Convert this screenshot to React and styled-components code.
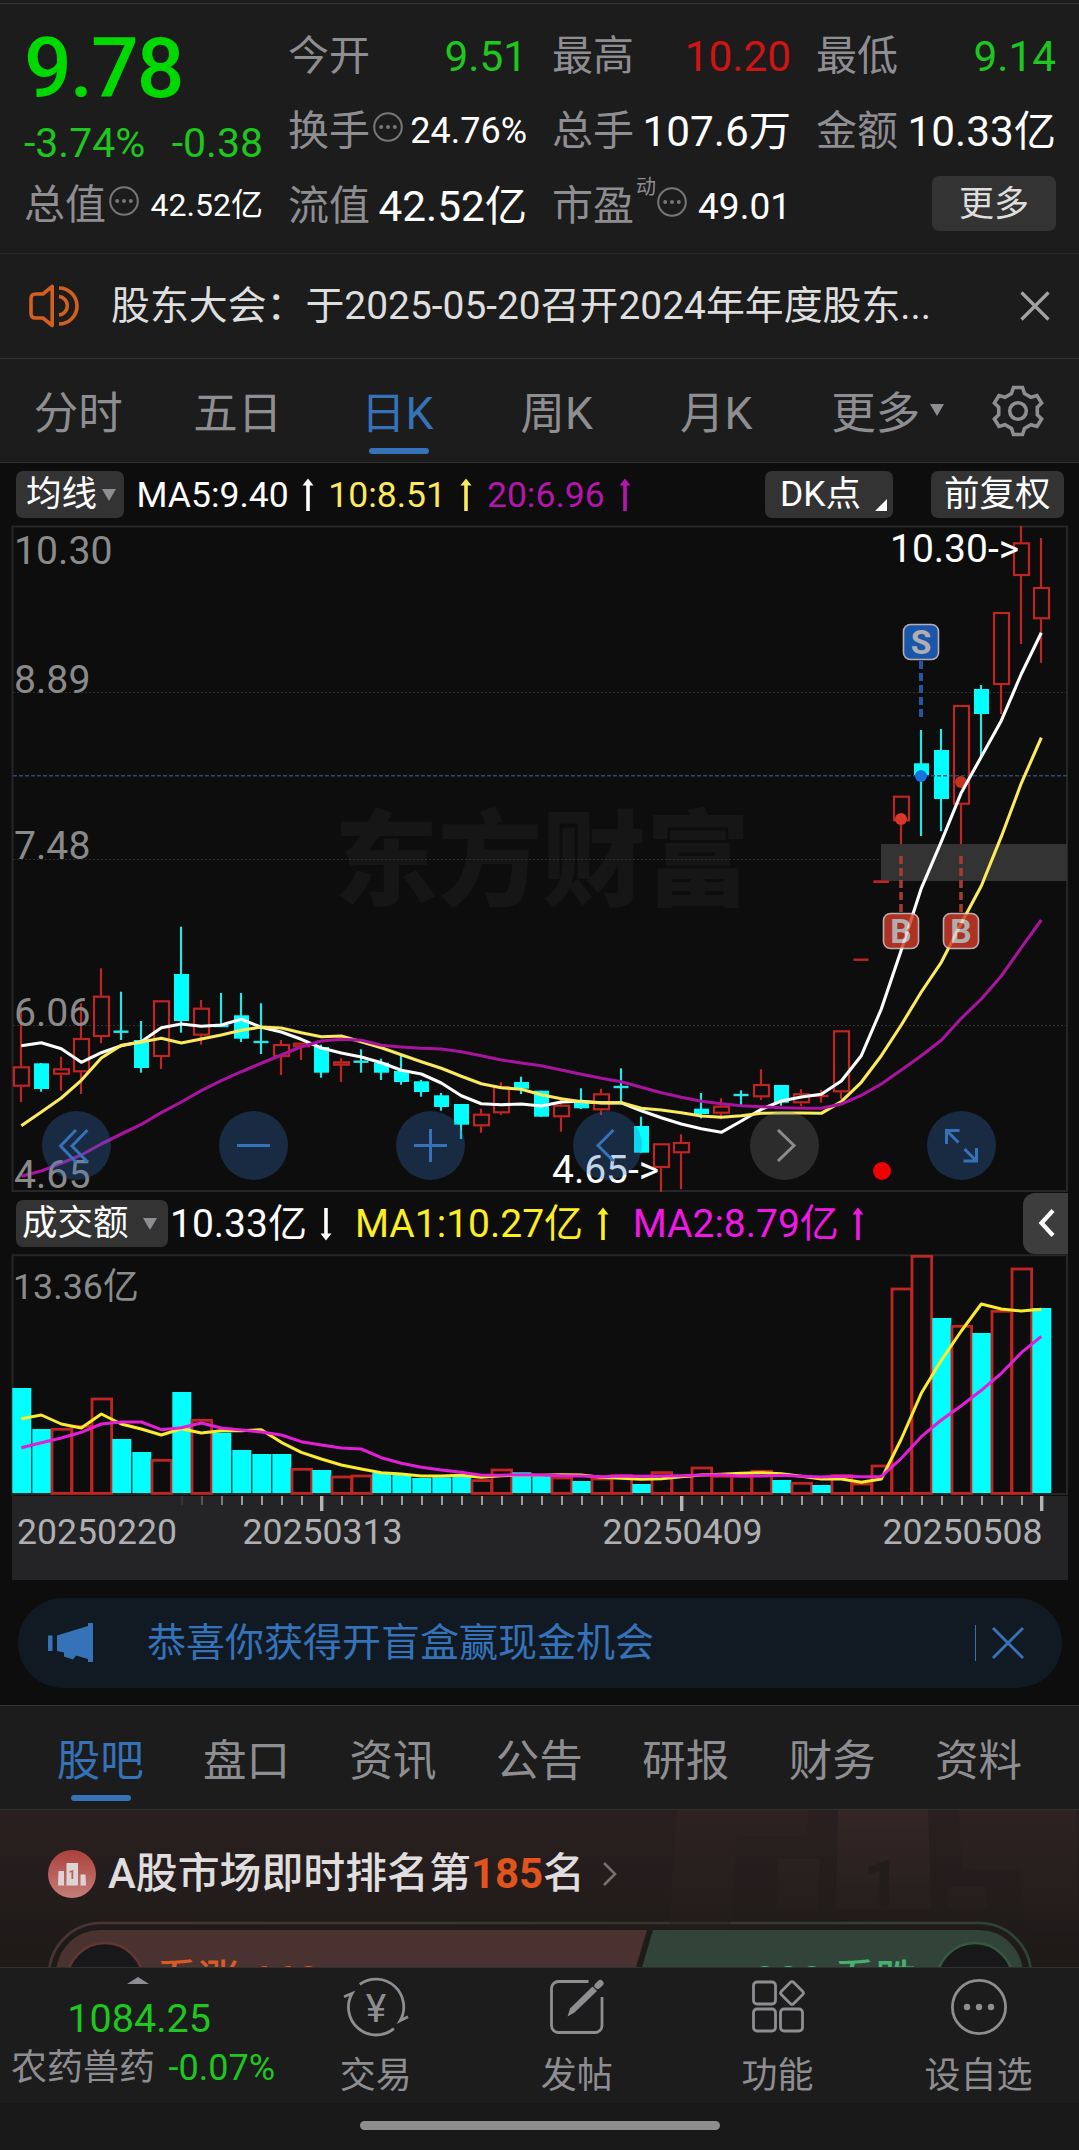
import React from "react";
import styled, { createGlobalStyle } from "styled-components";

const GREEN = "#1ec61e";
const BLUE = "#3572b8";
const GREY = "#8e8e92";
const UP = "#bf2522";
const DOWN = "#00ffff";
const FONT = `Roboto, "Noto Sans CJK SC", sans-serif`;

const STEP = 20;
const FIRST_X = 21;
const xAt = (i) => FIRST_X + i * STEP;

// [direction, body top, body bottom, high, low]
const candles = [
  ["up", 541.3, 561.7, 481.7, 577],
  ["down", 538.3, 564, 538, 566.7],
  ["up", 543.3, 549.7, 531.7, 565.7],
  ["up", 513, 547.3, 478.3, 569],
  ["up", 470.7, 512, 443.3, 518.3],
  ["down", 506.7, 506.7, 466.7, 515],
  ["down", 515, 543, 496, 547.7],
  ["up", 475.3, 532, 475.3, 544],
  ["down", 449, 496, 401.7, 507.7],
  ["up", 482.7, 510.7, 475, 519.7],
  ["down", 501, 501, 468, 501],
  ["down", 490.3, 513.7, 468, 517],
  ["down", 517, 517, 478.3, 529],
  ["up", 519, 532, 515, 550],
  ["up", 517.7, 522.3, 517.7, 535],
  ["down", 522, 547.7, 519.7, 552.7],
  ["up", 536.3, 540.7, 533.3, 557],
  ["down", 536.7, 536.7, 524.3, 547.7],
  ["down", 537.7, 547.7, 533.7, 555],
  ["down", 546, 557, 531, 559.7],
  ["down", 556.3, 567, 555, 571.7],
  ["down", 570.3, 582, 568, 585.7],
  ["down", 579, 599.7, 579, 614],
  ["up", 588.7, 601.3, 583.7, 607.7],
  ["up", 561, 588.3, 557.3, 590],
  ["down", 557, 563.7, 551.7, 569],
  ["down", 565.7, 591.7, 565.7, 591.7],
  ["up", 579.7, 592.3, 572.3, 606.7],
  ["down", 576.3, 583.3, 563.3, 584],
  ["up", 568.3, 585.3, 563.7, 590],
  ["down", 562, 562, 543.3, 576.3],
  ["down", 601, 627.7, 591.7, 627.7],
  ["up", 618.3, 643, 618.3, 667],
  ["up", 617, 628.3, 609.3, 664.3],
  ["down", 583.7, 589, 568, 593.3],
  ["up", 580.7, 588.7, 573.3, 594.3],
  ["down", 570, 570, 565.3, 581.7],
  ["up", 559, 572.3, 544.3, 575],
  ["down", 560, 577.7, 560, 580.7],
  ["up", 568.3, 578.3, 564.3, 581],
  ["up", 571, 571, 565, 577.7],
  ["up", 505.3, 567.3, 505.3, 574],
  ["up", 434.7, 434.7, 434.7, 434.7],
  ["up", 356.7, 356.7, 356.7, 356.7],
  ["up", 270.7, 296.3, 270.7, 319],
  ["down", 238.3, 250.7, 205, 311],
  ["down", 225, 274, 204, 306],
  ["up", 180, 279.7, 180, 319],
  ["down", 164, 189, 160, 233],
  ["up", 87, 160, 87, 189],
  ["up", 17.3, 51, 1, 119],
  ["up", 62, 94.3, 13, 137.7],
];

const ma5 = [
  520.7, 517.7, 523.7, 537.3, 527.7, 520.7, 516.7, 502.7, 499, 501.3, 500, 494.3, 502.3,
  507, 514.3, 523, 528, 532, 537.7, 545.3, 549, 558, 570.7, 578.7, 579.7, 579, 581, 577,
  576.3, 577.7, 577.7, 585.7, 592.7, 599, 603.7, 607.3, 596, 584.3, 576, 572, 569.3, 556,
  530.7, 484, 425, 363.3, 316.7, 267.7, 231.7, 195.7, 149, 107.7,
];
const ma10 = [
  600.7, 587, 573, 555.3, 533, 520.3, 517, 513.3, 518, 514, 510, 505.3, 502, 503, 507.7,
  511.7, 511, 516.7, 522.7, 529.7, 536.7, 543.3, 551.3, 558.7, 562.7, 564.3, 569.7, 573.7,
  576.7, 578, 577.7, 583.3, 585, 587.7, 591, 592.3, 590.7, 588.3, 588, 588, 588.3, 576.7,
  557.3, 530.7, 500, 467, 437.3, 398.3, 361, 311.7, 258.3, 212.7,
];
const ma20 = [
  651.3, 646, 638.3, 630, 619, 609, 599.3, 587.7, 577, 565.7, 555.7, 546.7, 538.3, 530,
  521.7, 516, 514.3, 515.3, 520.3, 522, 523.3, 524, 526.7, 530.7, 535, 538, 540.7, 545,
  549.3, 553.3, 556.7, 562.3, 567.7, 572.3, 576.3, 578.7, 580.7, 581.7, 582.7, 583.3,
  583.3, 579, 570.3, 559, 545, 530.7, 515.3, 493.3, 474, 451, 422.7, 395,
];

// [direction, top of bar]
const volumes = [
  ["down", 134], ["down", 175], ["up", 174], ["up", 171], ["up", 143.7], ["down", 185],
  ["down", 198], ["up", 205], ["down", 138], ["up", 165], ["down", 178.7], ["down", 196],
  ["down", 200], ["down", 200], ["up", 214], ["down", 216], ["up", 221.7], ["up", 220.7],
  ["down", 218.7], ["down", 220.7], ["down", 224], ["down", 223.3], ["down", 222.3],
  ["up", 225.3], ["up", 214.7], ["down", 218.3], ["down", 222.3], ["up", 222.7],
  ["down", 227], ["up", 223.7], ["up", 220.3], ["down", 230], ["up", 217.3], ["up", 221.3],
  ["up", 212.7], ["up", 221], ["up", 221], ["up", 216], ["down", 226], ["up", 228],
  ["down", 231], ["up", 220.3], ["up", 228.7], ["up", 210.7], ["up", 33.7], ["up", 1],
  ["down", 64], ["up", 71], ["down", 79], ["up", 56], ["up", 13.7], ["down", 54],
];
// volume averages are kept in thirds of a pixel
const volumeY = (v) => v / 3 - 74;
const volumeMa1 = [
  716, 705, 732, 744, 702, 732, 747, 765, 746, 759, 752, 752, 749, 787, 817, 837, 855, 867,
  878, 882, 888, 888, 886, 892, 887, 886, 886, 884, 885, 892, 895, 898, 896, 890, 885, 883,
  880, 878, 881, 889, 897, 897, 907, 897, 777, 640, 541, 453, 372, 387, 393, 388,
].map(volumeY);
const volumeMa2 = [
  803, 788, 774, 757, 732, 726, 726, 749, 743, 729, 744, 750, 756, 765, 785, 795, 804, 807,
  833, 850, 862, 870, 877, 886, 886, 884, 885, 887, 888, 890, 888, 889, 888, 887, 885, 884,
  888, 888, 886, 889, 891, 889, 890, 890, 835, 770, 720, 677, 631, 580, 518, 469,
].map(volumeY);

const toPoints = (values) => values.map((y, i) => `${xAt(i) + 0.3},${y.toFixed(1)}`).join(" ");

function DotsIcon() {
  return (
    <InfoDots width="30" height="30" viewBox="0 0 30 30">
      <circle cx="15" cy="15" r="13.8" fill="none" stroke="#77777a" strokeWidth="2" />
      <circle cx="8.2" cy="15" r="2" fill="#77777a" />
      <circle cx="15" cy="15" r="2" fill="#77777a" />
      <circle cx="21.8" cy="15" r="2" fill="#77777a" />
    </InfoDots>
  );
}

function Arrow({ down, left }) {
  return (
    <ArrowSvg $left={left} width="12" height="34" viewBox="0 0 12 34">
      <g transform={down ? "rotate(180 6 17)" : undefined}>
        <path d="M6 0.5L11.5 7.5H0.5Z" fill="currentColor" />
        <path d="M6 5V33" stroke="currentColor" strokeWidth="3.6" />
      </g>
    </ArrowSvg>
  );
}

function Stat({ label, value, color, size, info, sup }) {
  return (
    <StatRow>
      <StatLabel>{label}</StatLabel>
      {sup && <Sup>{sup}</Sup>}
      {info && <DotsIcon />}
      <StatValue $color={color} $size={size}>
        {value}
      </StatValue>
    </StatRow>
  );
}

function QuoteHeader() {
  return (
    <QuotePanel>
      <QuoteColumn $width={239}>
        <Price>9.78</Price>
        <Change>
          <span>-3.74%</span>
          <span>-0.38</span>
        </Change>
        <Stat label="总值" value="42.52亿" size={32} info />
      </QuoteColumn>
      <QuoteColumn $width={239}>
        <Stat label="今开" value="9.51" color={GREEN} />
        <Stat label="换手" value="24.76%" size={36} info />
        <Stat label="流值" value="42.52亿" />
      </QuoteColumn>
      <QuoteColumn $width={239}>
        <Stat label="最高" value="10.20" color="#d01414" />
        <Stat label="总手" value="107.6万" />
        <Stat label="市盈" value="49.01" size={37} sup="动" info />
      </QuoteColumn>
      <QuoteColumn $width={240}>
        <Stat label="最低" value="9.14" color={GREEN} />
        <Stat label="金额" value="10.33亿" />
        <MoreRow>
          <MoreButton>更多</MoreButton>
        </MoreRow>
      </QuoteColumn>
    </QuotePanel>
  );
}

function NoticeBar() {
  return (
    <Notice>
      <svg width="54" height="46" viewBox="0 0 54 46" fill="none" stroke="#d4601f" strokeWidth="3.6">
        <path d="M24.2 3.4V42.6L15 35H7.5Q3 35 3 30.5V16Q3 11 7.5 11H15Z" strokeLinejoin="round" />
        <path d="M31 13.5A9.3 9.3 0 0 1 31 32" />
        <path d="M31 5A18 18 0 0 1 31 41" />
      </svg>
      <NoticeText>股东大会：于2025-05-20召开2024年年度股东...</NoticeText>
      <svg width="30" height="30" viewBox="0 0 30 30">
        <path d="M1.5 1.5L28.5 28.5M28.5 1.5L1.5 28.5" stroke="#a2a2a2" strokeWidth="3.2" />
      </svg>
    </Notice>
  );
}

const periods = ["分时", "五日", "日K", "周K", "月K", "更多"];

function PeriodTabs() {
  return (
    <Periods>
      {periods.map((name) => (
        <Period key={name} $active={name === "日K"}>
          {name}
          {name === "更多" && <PeriodCaret />}
        </Period>
      ))}
      <GearBox>
        <svg width="56" height="56" viewBox="-28 -28 56 56" fill="none" stroke={GREY} strokeWidth="3.6">
          <path d="M-4.5 -23.5H4.5L6.5 -17.5L13 -13.8L19 -15.5L23.6 -8L19.3 -3.8V3.8L23.6 8L19 15.5L13 13.8L6.5 17.5L4.5 23.5H-4.5L-6.5 17.5L-13 13.8L-19 15.5L-23.6 8L-19.3 3.8V-3.8L-23.6 -8L-19 -15.5L-13 -13.8L-6.5 -17.5Z" />
          <circle r="8.3" />
        </svg>
      </GearBox>
    </Periods>
  );
}

function Candle({ index, data }) {
  const [dir, top, bottom, high, low] = data;
  const x = xAt(index);
  const color = dir === "up" ? UP : "#28e6e6";
  if (bottom - top < 1)
    return (
      <g stroke={color} strokeWidth="2.2">
        <path d={`M${x} ${high}V${low}`} />
        <path d={`M${x - 7.5} ${top}H${x + 7.5}`} strokeWidth="2.4" />
      </g>
    );
  if (dir === "down")
    return (
      <g>
        <path d={`M${x} ${high}V${low}`} stroke={color} strokeWidth="2.2" />
        <rect x={x - 7} y={top} width="15" height={bottom - top} fill={DOWN} />
      </g>
    );
  return (
    <g fill="none" stroke={color} strokeWidth="2.2">
      <path d={`M${x} ${high}V${top}M${x} ${bottom}V${low}`} />
      <rect x={x - 7} y={top + 1} width="15" height={Math.max(bottom - top - 2, 1)} />
    </g>
  );
}

function TradeBadge({ x, y, letter, fill }) {
  return (
    <g opacity="0.82">
      <rect x={x - 17.5} y={y} width="35" height="35" rx="7" fill={fill} stroke="#e0d2d2" strokeWidth="1.6" />
      <text x={x} y={y + 29.5} fontSize="33.5" fontWeight="700" fill="#d5d2d5" textAnchor="middle">
        {letter}
      </text>
    </g>
  );
}

function PriceChart() {
  return (
    <PriceBox>
      <ChartSvg width="1079" height="667" viewBox="0 0 1079 667">
        <text x="542" y="373" fontSize="104" fontWeight="900" fill="#161616" textAnchor="middle">
          东方财富
        </text>
        <g stroke="#2e2e2e" strokeDasharray="2 2">
          <path d="M13 167.5H1067M13 334.5H1067M13 500.5H1067" />
        </g>
        <path d="M12.5 667V1.5H1067V666H12.5" fill="none" stroke="#262626" strokeWidth="2" />
        {candles.map((c, i) => (
          <Candle key={i} index={i} data={c} />
        ))}
        <path d="M13 250.7H1067" stroke="#2a4a72" strokeWidth="1.5" strokeDasharray="4 2" />
        <rect x="881" y="319" width="186" height="37" fill="#333333" />
        <path d="M873.5 356.7H889" stroke={UP} strokeWidth="2.4" />
        <path d="M921 136V193" stroke="#2455a0" strokeWidth="4" strokeDasharray="8 4" />
        <path d="M901 331V388M961 331V388" stroke="#a33c30" strokeWidth="3.6" strokeDasharray="8 4" />
        <circle cx="901" cy="294" r="6" fill="#d8372a" />
        <circle cx="961" cy="257" r="6" fill="#c0331f" />
        <circle cx="921" cy="251" r="6" fill="#1673e0" />
        <g fill="none" strokeWidth="3.1" strokeLinejoin="round">
          <polyline points={toPoints(ma5)} stroke="#ffffff" />
          <polyline points={toPoints(ma10)} stroke="#fbe95e" />
          <polyline points={toPoints(ma20)} stroke="#a9149f" />
        </g>
        <TradeBadge x={921} y={99.5} letter="S" fill="#1e66cc" />
        <TradeBadge x={901} y={388.5} letter="B" fill="#d23b2a" />
        <TradeBadge x={961} y={388.5} letter="B" fill="#d23b2a" />
        <g fontSize="39.2" fill="#8a8a8a">
          <text x="14" y="38.5">10.30</text>
          <text x="14" y="167.5">8.89</text>
          <text x="14" y="334">7.48</text>
          <text x="14" y="500.5">6.06</text>
          <text x="14" y="662.5">4.65</text>
        </g>
        <g fontSize="39" fill="#ffffff">
          <text x="890" y="37">10.30-&gt;</text>
          <text x="552" y="657.7">4.65-&gt;</text>
        </g>
        <circle cx="882" cy="646" r="9" fill="#f00000" />
      </ChartSvg>
      <Controls>
        <RoundButton>
          <svg width="69" height="69" viewBox="0 0 69 69">
            <path d="M34 19L18.5 35L34 51M45.5 19L30 35L45.5 51" />
          </svg>
        </RoundButton>
        <RoundButton>
          <svg width="69" height="69" viewBox="0 0 69 69">
            <path d="M18 34.5H51" />
          </svg>
        </RoundButton>
        <RoundButton>
          <svg width="69" height="69" viewBox="0 0 69 69">
            <path d="M18 34.5H51M34.5 18V51" />
          </svg>
        </RoundButton>
        <RoundButton>
          <svg width="69" height="69" viewBox="0 0 69 69">
            <path d="M40.5 19L25 34.5L40.5 50" />
          </svg>
        </RoundButton>
        <RoundButton $muted>
          <svg width="69" height="69" viewBox="0 0 69 69">
            <path d="M28 19L44 34.5L28 50" />
          </svg>
        </RoundButton>
        <RoundButton>
          <svg width="69" height="69" viewBox="0 0 69 69">
            <path d="M32.5 19.5H19.5V33M19.5 19.5L31.5 31.5M49.5 37V50H36.5M49.5 50L37.5 38" />
          </svg>
        </RoundButton>
      </Controls>
    </PriceBox>
  );
}

function VolumeChart() {
  return (
    <ChartSvg width="1079" height="242" viewBox="0 0 1079 242">
      <path d="M12.5 242V1.2H1067V240H12.5" fill="none" stroke="#262626" strokeWidth="2" />
      <text x="13" y="45" fontSize="35.8" fill="#8a8a8a">
        13.36亿
      </text>
      {volumes.map(([dir, top], i) =>
        dir === "up" ? (
          <rect key={i} x={xAt(i) - 9} y={top + 1.3} width="19.6" height={238 - top} fill="none" stroke={UP} strokeWidth="2.8" />
        ) : (
          <rect key={i} x={xAt(i) - 8.7} y={top} width="19" height={239 - top} fill={DOWN} />
        )
      )}
      <g fill="none" strokeWidth="3" strokeLinejoin="round">
        <polyline points={toPoints(volumeMa1)} stroke="#fdec2e" />
        <polyline points={toPoints(volumeMa2)} stroke="#e01fd6" />
      </g>
    </ChartSvg>
  );
}

const majorTicks = [15, 33, 51];

function DateAxis() {
  return (
    <AxisStrip>
      <ChartSvg width="1056" height="84" viewBox="12 0 1056 84">
        {candles.map((_, i) => {
          if (i < 8) return null;
          const major = majorTicks.includes(i);
          return (
            <rect
              key={i}
              x={xAt(i) + (major ? -1 : 0)}
              y="0"
              width={major ? 3.4 : 2}
              height={major ? 15 : 9}
              fill={major ? "#b4b4b4" : "#9a9a9a"}
              opacity={Math.min(1, 0.15 + (i - 8) * 0.28)}
            />
          );
        })}
        <g fontSize="35.6" fill="#b0b0b2">
          <text x="17" y="48">20250220</text>
          <text x="322.5" y="48" textAnchor="middle">20250313</text>
          <text x="682.5" y="48" textAnchor="middle">20250409</text>
          <text x="1042.5" y="48" textAnchor="end">20250508</text>
        </g>
      </ChartSvg>
    </AxisStrip>
  );
}

function PromoBanner() {
  return (
    <Banner>
      <svg width="46" height="40" viewBox="0 0 46 40" fill={BLUE}>
        <path d="M0 12.5H4.5V28H0ZM9 12.5L40 3V0H45V39H40V36L28 32.5L25 36.5L16 33.5V29.5L9 28Z" />
      </svg>
      <BannerText>恭喜你获得开盲盒赢现金机会</BannerText>
      <BannerDivider />
      <svg width="34" height="34" viewBox="0 0 34 34">
        <path d="M2 2L32 32M32 2L2 32" stroke={BLUE} strokeWidth="3" />
      </svg>
    </Banner>
  );
}

const sections = ["股吧", "盘口", "资讯", "公告", "研报", "财务", "资料"];

function RankCard() {
  return (
    <Rank>
      <RankArt width="410" height="120" viewBox="669 0 410 120">
        <defs>
          <linearGradient id="podium" x1="0" y1="0" x2="0" y2="120" gradientUnits="userSpaceOnUse">
            <stop offset="0" stopColor="#352726" />
            <stop offset="1" stopColor="#221d1c" />
          </linearGradient>
        </defs>
        <g fill="url(#podium)">
          <path d="M677 0H808L807 26H737L730 120H669Z" opacity="0.4" />
          <path d="M838 0H928L931 99H836Z" opacity="0.9" />
          <path d="M778 49H820L818 99H777Z" opacity="0.6" />
          <path d="M948 77H986L987 99H949Z" opacity="0.6" />
          <path d="M959 0H1076L1079 120H1026L1019 60L962 59Z" opacity="0.4" />
        </g>
        <text x="882" y="98" fontSize="66" fontWeight="700" fill="#231c1c" textAnchor="middle">
          1
        </text>
      </RankArt>
      <RankTitle>
        <svg width="48" height="48" viewBox="0 0 48 48">
          <defs>
            <linearGradient id="medal" x1="0" y1="0" x2="0" y2="1">
              <stop offset="0" stopColor="#ab403c" />
              <stop offset="1" stopColor="#c67e78" />
            </linearGradient>
          </defs>
          <circle cx="24" cy="24" r="24" fill="url(#medal)" />
          <path d="M18.5 13H30V35.5H18.5ZM10.5 21H16V35.5H10ZM32.5 24.5H37.5L38 35.5H32.5Z" fill="#ddd5d5" />
          <text x="24" y="29" fontSize="12" fontWeight="700" fill="#ba5f5a" textAnchor="middle">
            1
          </text>
        </svg>
        <RankText>
          A股市场即时排名第<b>185</b>名
        </RankText>
        <svg width="16" height="26" viewBox="0 0 16 26">
          <path d="M2 2L13 13L2 24" fill="none" stroke="#77706f" strokeWidth="2.6" />
        </svg>
      </RankTitle>
      <svg width="1079" height="46" viewBox="0 0 1079 46">
        <defs>
          <linearGradient id="ring" x1="0" y1="0" x2="1" y2="0">
            <stop offset="0" stopColor="#4a3533" />
            <stop offset="0.6" stopColor="#36352d" />
            <stop offset="1" stopColor="#2f443a" />
          </linearGradient>
        </defs>
        <rect x="49" y="2" width="982" height="104" rx="52" fill="none" stroke="url(#ring)" strokeWidth="2.6" />
        <path d="M100 9H647L621 97H100A44 44 0 0 1 100 9Z" fill="#4a3230" />
        <path d="M653 9H979A44 44 0 0 1 979 97H627Z" fill="#324439" />
        <circle cx="105" cy="60" r="38" fill="#18181a" stroke="#633534" strokeWidth="2.4" />
        <circle cx="975" cy="60" r="38" fill="#18181a" stroke="#35583f" strokeWidth="2.4" />
        <g fontSize="41.5" fontWeight="500">
          <text x="156" y="74" fill="#dc5a24">看涨 660</text>
          <text x="917" y="74" fill="#46b070" textAnchor="end">880 看跌</text>
        </g>
      </svg>
    </Rank>
  );
}

function BottomBar() {
  return (
    <BottomNav>
      <IndexBox>
        <IndexCaret />
        <IndexValue>1084.25</IndexValue>
        <IndexLine>
          农药兽药<em>-0.07%</em>
        </IndexLine>
      </IndexBox>
      <NavItem>
        <svg width="68" height="60" viewBox="-34 -30 68 60">
          <path d="M-16.2 -22.7A27.8 27.8 0 0 1 24.1 13.7L32 9.7M17.9 21.7A27.8 27.8 0 0 1 -23.8 -13.7L-32 -10.3" />
          <text x="0" y="14.5" fontSize="39" textAnchor="middle" fill={GREY} stroke="none">
            ¥
          </text>
        </svg>
        交易
      </NavItem>
      <NavItem>
        <svg width="56" height="60" viewBox="-1 -3 56 60">
          <path d="M38.5 1.5H8.5A7 7 0 0 0 1.5 8.5V45.5A7 7 0 0 0 8.5 52.5H45A7 7 0 0 0 52 45.5V17" />
          <path d="M17.5 36.5L20 28.5L42.5 6.5L47 11L24.5 32.5Z" fill={GREY} stroke="none" />
          <path d="M47.7 5.8L50.3 3.2" strokeWidth="6.5" strokeLinecap="round" />
        </svg>
        发帖
      </NavItem>
      <NavItem>
        <svg width="54" height="60" viewBox="-1.5 -4 54 60">
          <rect x="1" y="1" width="22" height="22" rx="3.5" />
          <rect x="1" y="28" width="22" height="22" rx="3.5" />
          <rect x="28" y="28" width="22" height="22" rx="3.5" />
          <rect x="30.8" y="3.3" width="17.4" height="17.4" rx="2.5" transform="rotate(45 39.5 12)" />
        </svg>
        功能
      </NavItem>
      <NavItem>
        <svg width="60" height="60" viewBox="-30 -30 60 60">
          <circle r="26.6" />
          <g fill={GREY} stroke="none">
            <circle cx="-12" r="3.2" />
            <circle r="3.2" />
            <circle cx="12" r="3.2" />
          </g>
        </svg>
        设自选
      </NavItem>
    </BottomNav>
  );
}

export default function App() {
  return (
    <Page>
      <GlobalStyle />
      <QuoteHeader />
      <NoticeBar />
      <PeriodTabs />
      <LegendRow $height={63} $size={35.5} $line>
        <Chip $width={108} $pad={10}>
          均线
          <Caret $left={5} />
        </Chip>
        <LegendText $color="#ffffff" $left={12.5}>MA5:9.40<Arrow left={13.5} /></LegendText>
        <LegendText $color="#fbe95e" $left={14}>10:8.51<Arrow left={14.5} /></LegendText>
        <LegendText $color="#b416ac" $left={14.5}>20:6.96<Arrow left={14} /></LegendText>
        <Spacer />
        <Chip $width={128} $pad={15} $fold>
          DK点
        </Chip>
        <Chip $width={133} $pad={13} $left={38} $right={15}>
          前复权
        </Chip>
      </LegendRow>
      <PriceChart />
      <LegendRow $height={62} $size={39}>
        <Chip $width={152} $pad={6}>
          成交额
          <Caret $left={14} />
        </Chip>
        <LegendText $color="#ffffff" $left={2}>10.33亿<Arrow down left={13} /></LegendText>
        <LegendText $color="#fdee21" $left={23}>MA1:10.27亿<Arrow left={13.5} /></LegendText>
        <LegendText $color="#f018e4" $left={24}>MA2:8.79亿<Arrow left={13} /></LegendText>
        <Spacer />
        <Collapse>
          <svg width="18" height="30" viewBox="0 0 18 30">
            <path d="M15 2.5L3.5 15L15 27.5" fill="none" stroke="#ffffff" strokeWidth="4.2" />
          </svg>
        </Collapse>
      </LegendRow>
      <VolumeChart />
      <DateAxis />
      <PromoBanner />
      <SectionTabs>
        {sections.map((name, i) => (
          <SectionTab key={name} $active={i === 0}>
            {name}
          </SectionTab>
        ))}
      </SectionTabs>
      <RankCard />
      <BottomBar />
      <HomeArea>
        <HomeBar />
      </HomeArea>
    </Page>
  );
}

const GlobalStyle = createGlobalStyle`
  * {
    box-sizing: border-box;
  }
  body {
    margin: 0;
    background: #0d0d0d;
  }
  svg {
    display: block;
    flex-shrink: 0;
  }
`;

const Page = styled.div`
  width: 1079px;
  height: 2150px;
  padding-top: 3px;
  display: flex;
  flex-direction: column;
  overflow: hidden;
  background: linear-gradient(#1c1c1c 3px, #0d0d0d 3px);
  color: #ffffff;
  font-family: ${FONT};
  white-space: nowrap;
  > * {
    flex-shrink: 0;
  }
`;

const QuotePanel = styled.div`
  height: 250px;
  padding: 14.5px 0 0 24px;
  display: flex;
  gap: 25px;
  background: #1c1c1c;
  border-top: 1px solid #343434;
`;
const QuoteColumn = styled.div`
  width: ${(p) => p.$width}px;
`;
const Price = styled.div`
  height: 100px;
  line-height: 100px;
  font-size: 84px;
  font-weight: 500;
  letter-spacing: -2px;
  color: #00d900;
`;
const Change = styled.div`
  display: flex;
  justify-content: space-between;
  height: 49px;
  line-height: 49px;
  font-size: 41px;
  color: ${GREEN};
`;
const StatRow = styled.div`
  display: flex;
  align-items: center;
  height: 75px;
  line-height: 75px;
`;
const StatLabel = styled.span`
  font-size: 41px;
  color: ${GREY};
`;
const StatValue = styled.span`
  margin-left: auto;
  font-size: ${(p) => p.$size || 42.3}px;
  color: ${(p) => p.$color || "#ffffff"};
`;
const Sup = styled.span`
  align-self: flex-start;
  margin: 8px -2px 0 2px;
  line-height: 20px;
  font-size: 20px;
  color: ${GREY};
`;
const InfoDots = styled.svg`
  margin: 0 0 8px 3px;
`;
const MoreRow = styled.div`
  display: flex;
  justify-content: flex-end;
  padding-top: 7px;
`;
const MoreButton = styled.div`
  width: 124px;
  height: 55px;
  line-height: 57px;
  border-radius: 7px;
  background: #333333;
  color: #dedede;
  font-size: 35px;
  text-align: center;
`;

const Notice = styled.div`
  height: 105px;
  padding: 0 29px 0 28px;
  display: flex;
  align-items: center;
  background: #1c1c1c;
  border-top: 1px solid #282828;
`;
const NoticeText = styled.div`
  flex: 1;
  margin-left: 29px;
  font-size: 38.9px;
  line-height: 60px;
  color: #dedede;
`;

const Periods = styled.div`
  height: 104px;
  display: flex;
  background: #1c1c1c;
  border-top: 1px solid #343434;
`;
const Period = styled.div`
  display: flex;
  flex-direction: column;
  align-items: center;
  position: relative;
  width: 159.5px;
  height: 103px;
  padding-right: 3px;
  line-height: 110px;
  font-size: 44.5px;
  color: ${(p) => (p.$active ? BLUE : GREY)};
  &::after {
    content: "";
    position: absolute;
    left: 49.5px;
    bottom: 8px;
    width: 60px;
    height: 6px;
    border-radius: 3px;
    background: ${(p) => (p.$active ? BLUE : "transparent")};
  }
`;
const PeriodCaret = styled.span`
  position: absolute;
  top: 45px;
  right: 13px;
  border: 7.5px solid transparent;
  border-top: 12px solid ${GREY};
  border-bottom: 0;
`;
const GearBox = styled.div`
  margin-left: auto;
  padding: 24px 33px 0 0;
`;

const LegendRow = styled.div`
  height: ${(p) => p.$height}px;
  padding-left: 16px;
  display: flex;
  align-items: center;
  font-size: ${(p) => p.$size}px;
  border-top: ${(p) => (p.$line ? "1px solid #303030" : "none")};
`;
const LegendText = styled.div`
  display: flex;
  align-items: center;
  margin-left: ${(p) => p.$left}px;
  padding-top: 1px;
  line-height: 46px;
  color: ${(p) => p.$color};
`;
const ArrowSvg = styled.svg`
  margin-left: ${(p) => p.$left}px;
`;
const Chip = styled.div`
  position: relative;
  display: flex;
  align-items: center;
  width: ${(p) => p.$width}px;
  height: 47px;
  padding-top: 1px;
  padding-left: ${(p) => p.$pad}px;
  margin-left: ${(p) => p.$left || 0}px;
  margin-right: ${(p) => p.$right || 0}px;
  border-radius: 7px;
  background: #333333;
  font-size: 35.5px;
  line-height: 47px;
  color: #ffffff;
  &::after {
    content: "";
    display: ${(p) => (p.$fold ? "block" : "none")};
    position: absolute;
    right: 6px;
    bottom: 7px;
    border-left: 12px solid transparent;
    border-bottom: 12px solid #ffffff;
  }
`;
const Caret = styled.span`
  margin-left: ${(p) => p.$left}px;
  border: 7.5px solid transparent;
  border-top: 12px solid ${GREY};
  border-bottom: 0;
`;
const Spacer = styled.div`
  flex: 1;
`;
const Collapse = styled.div`
  width: 45px;
  height: 61px;
  margin-right: 11px;
  padding-left: 15px;
  display: flex;
  align-items: center;
  border-radius: 12px 0 0 12px;
  background: #3d3d3d;
`;

const PriceBox = styled.div`
  position: relative;
`;
const ChartSvg = styled.svg`
  overflow: visible;
  font-family: ${FONT};
`;
const Controls = styled.div`
  position: absolute;
  left: 42px;
  top: 586px;
  display: flex;
  gap: 108px;
`;
const RoundButton = styled.div`
  width: 69px;
  height: 69px;
  border-radius: 50%;
  background: ${(p) => (p.$muted ? "rgba(115, 115, 115, 0.3)" : "rgba(50, 113, 190, 0.3)")};
  path {
    fill: none;
    stroke: ${(p) => (p.$muted ? "#8c8c8c" : "#3672ba")};
    stroke-width: 3;
  }
`;
const AxisStrip = styled.div`
  width: 1056px;
  height: 84px;
  margin-left: 12px;
  background: #242426;
`;

const Banner = styled.div`
  height: 90px;
  margin: 18px 17px 17px 18px;
  padding: 0 37px 0 30px;
  display: flex;
  align-items: center;
  border-radius: 45px;
  background: #111a23;
`;
const BannerText = styled.div`
  flex: 1;
  margin-left: 53px;
  font-size: 39px;
  line-height: 90px;
  color: ${BLUE};
`;
const BannerDivider = styled.div`
  width: 1px;
  height: 36px;
  margin-right: 15px;
  background: ${BLUE};
`;

const SectionTabs = styled.div`
  height: 104px;
  padding: 0 27px;
  display: flex;
  background: #1c1c1c;
  border-top: 1px solid #343434;
`;
const SectionTab = styled.div`
  position: relative;
  display: flex;
  justify-content: center;
  width: 146.4px;
  line-height: 111px;
  font-size: 43.5px;
  color: ${(p) => (p.$active ? BLUE : GREY)};
  &::after {
    content: "";
    position: absolute;
    left: 44px;
    bottom: 8px;
    width: 60px;
    height: 6px;
    border-radius: 3px;
    background: ${(p) => (p.$active ? BLUE : "transparent")};
  }
`;

const Rank = styled.div`
  position: relative;
  height: 158px;
  overflow: hidden;
  border-top: 1px solid #343231;
  background: linear-gradient(#2a1f20, #1d1a18);
  font-family: ${FONT};
`;
const RankArt = styled.svg`
  position: absolute;
  top: 0;
  right: 0;
`;
const RankTitle = styled.div`
  position: relative;
  display: flex;
  align-items: center;
  height: 111px;
  padding: 16px 0 0 48px;
`;
const RankText = styled.div`
  margin: 0 17px 0 12px;
  font-size: 41.9px;
  font-weight: 500;
  line-height: 60px;
  color: #dfdddd;
  b {
    font-weight: 700;
    color: #e2541d;
  }
`;

const BottomNav = styled.div`
  height: 136px;
  display: flex;
  background: #1c1c1c;
  border-top: 1px solid #303030;
`;
const IndexBox = styled.div`
  display: flex;
  flex-direction: column;
  align-items: center;
  width: 276px;
  padding-top: 9px;
`;
const IndexCaret = styled.span`
  border: 11px solid transparent;
  border-bottom: 7px solid ${GREY};
  border-top: 0;
`;
const IndexValue = styled.div`
  margin: 8px 0 0 3px;
  font-size: 39.5px;
  line-height: 54px;
  color: ${GREEN};
`;
const IndexLine = styled.div`
  margin-left: 11px;
  align-self: flex-start;
  font-size: 36px;
  line-height: 45px;
  color: ${GREY};
  em {
    margin-left: 13.5px;
    font-style: normal;
    color: ${GREEN};
  }
`;
const NavItem = styled.div`
  display: flex;
  flex-direction: column;
  align-items: center;
  width: 201.4px;
  padding-top: 9px;
  font-size: 36px;
  line-height: 78px;
  color: ${GREY};
  svg {
    fill: none;
    stroke: ${GREY};
    stroke-width: 2.8;
  }
`;

const HomeArea = styled.div`
  height: 47px;
  padding-top: 18px;
  display: flex;
  justify-content: center;
  background: #181818;
`;
const HomeBar = styled.div`
  width: 360px;
  height: 9px;
  border-radius: 5px;
  background: #8e8e8e;
`;
